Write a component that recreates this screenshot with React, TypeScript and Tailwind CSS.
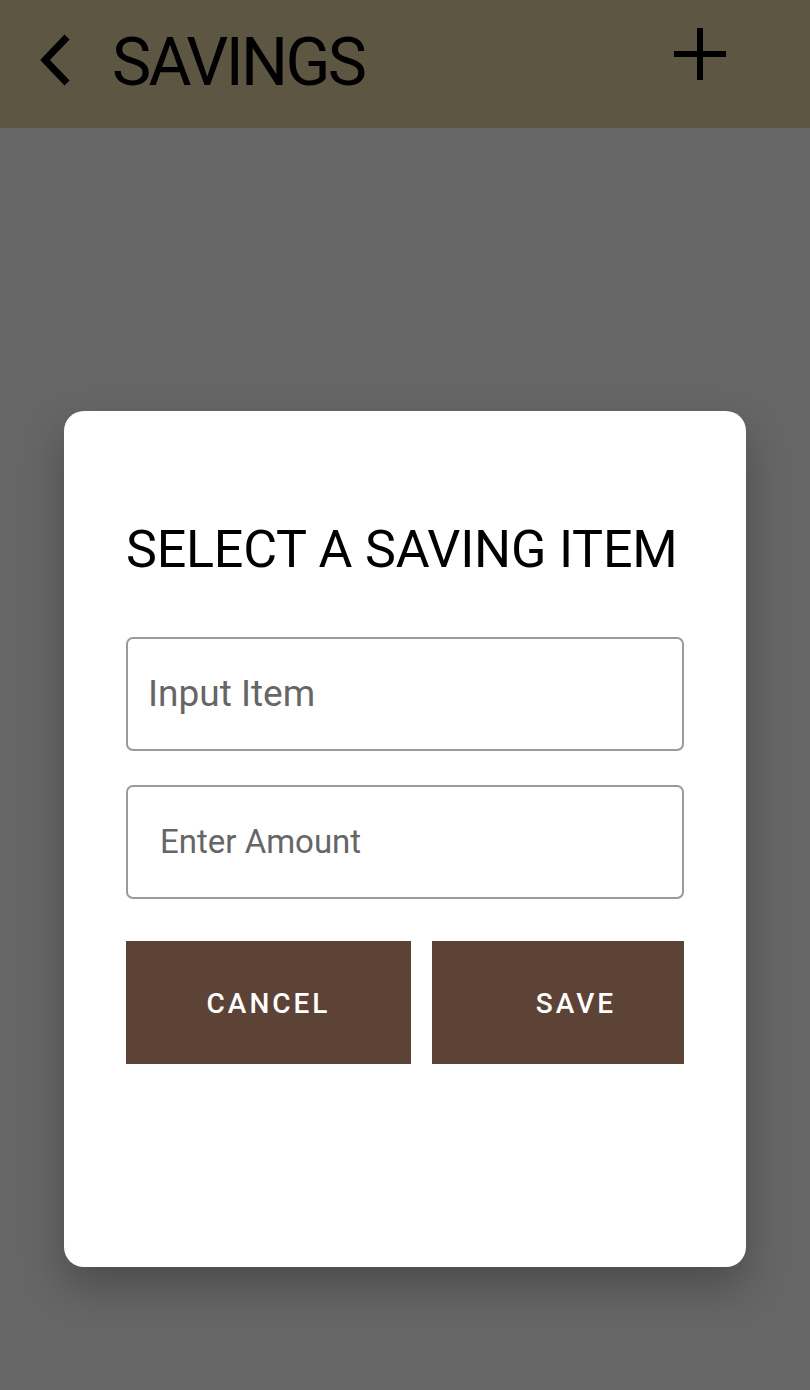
export default function App() {
  return (
    <div
      className="flex h-[1390px] w-[810px] flex-col bg-[#666666]"
      style={{ fontFamily: "Roboto, 'Liberation Sans', sans-serif" }}
    >
      <header className="flex h-[128px] items-center justify-between bg-[#5d5643] pl-[38px] pr-[84px]">
        <div className="flex items-center gap-[40px] pb-[2px]">
          <svg width="34" height="54" viewBox="0 0 34 54" fill="none" className="mb-[6px]">
            <path d="M29 4 L7 27 L29 50" stroke="#000" strokeWidth="7" />
          </svg>
          <h1 className="text-[66px] leading-none font-normal tracking-[-2.6px] text-black">SAVINGS</h1>
        </div>
        <svg width="52" height="52" viewBox="0 0 52 52" className="mb-[20px]">
          <path d="M26 0 V52 M0 26 H52" stroke="#000" strokeWidth="6" />
        </svg>
      </header>

      <div className="flex flex-1 justify-center pt-[283px]">
        <div className="flex h-[856px] w-[682px] flex-col rounded-[20px] bg-white px-[62px] pt-[113px] shadow-[0_20px_40px_rgba(0,0,0,0.25)]">
          <h2 className="text-[52px] leading-none font-normal tracking-[-0.2px] text-black">
            SELECT A SAVING ITEM
          </h2>

          <div className="mt-[61px] flex h-[114px] items-center rounded-[7px] border-2 border-[#9a9a9a] pl-[20px]">
            <span className="text-[37px] text-[#666666]">Input Item</span>
          </div>

          <div className="mt-[34px] flex h-[114px] items-center rounded-[7px] border-2 border-[#9a9a9a] pl-[32px]">
            <span className="text-[33px] text-[#666666]">Enter Amount</span>
          </div>

          <div className="mt-[42px] flex gap-[21px]">
            <button className="flex h-[123px] w-[285px] items-center justify-center bg-[#5d4236] pt-[3px] text-[28px] font-medium tracking-[3px] text-white">
              CANCEL
            </button>
            <button className="flex h-[123px] w-[252px] items-center justify-center bg-[#5d4236] pl-[36px] pt-[3px] text-[28px] font-medium tracking-[3px] text-white">
              SAVE
            </button>
          </div>
        </div>
      </div>
    </div>
  );
}
